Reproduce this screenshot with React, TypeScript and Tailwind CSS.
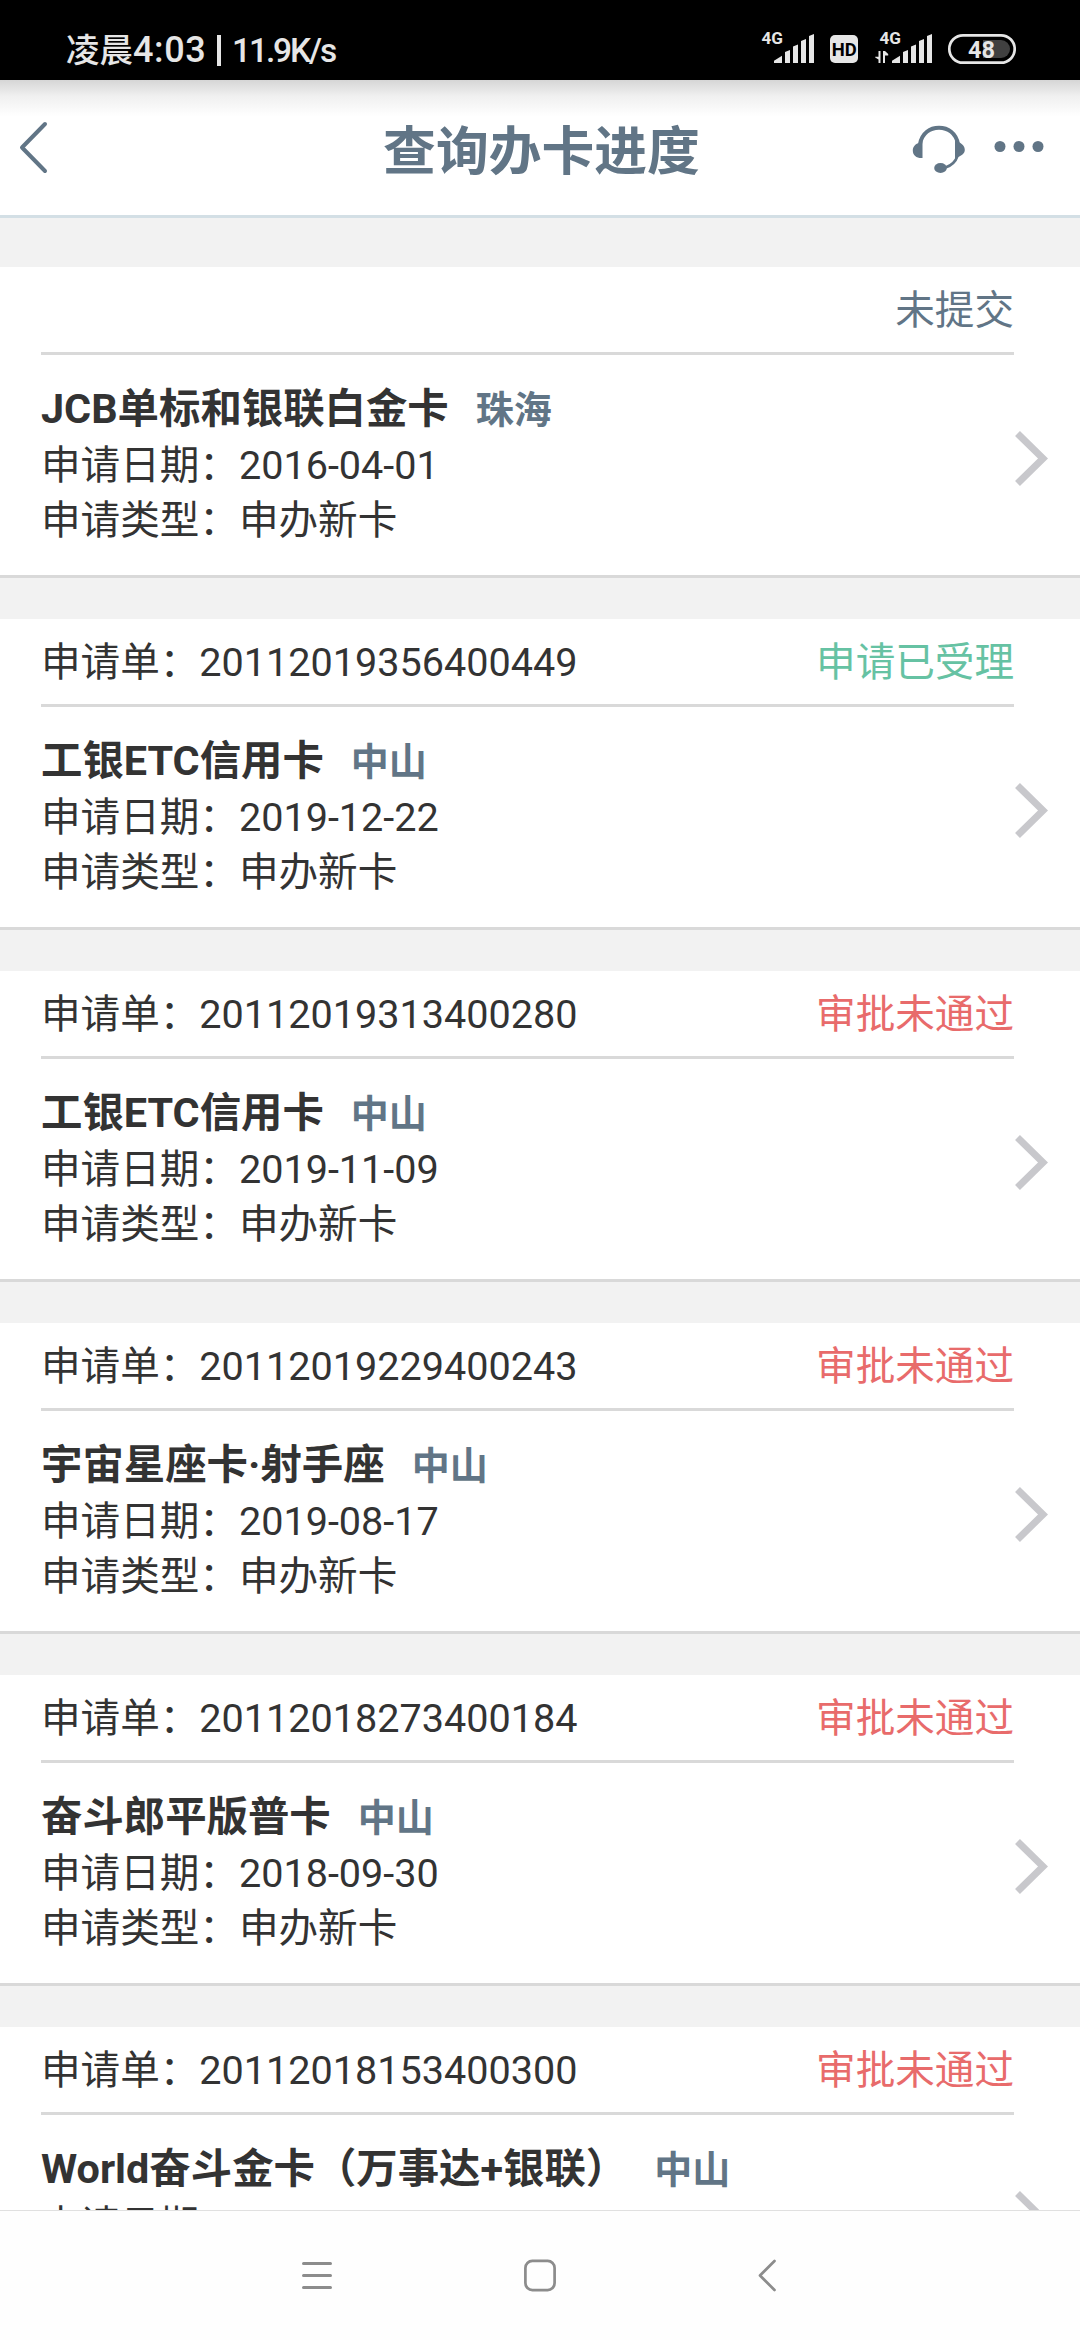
import React from 'react';

type Status = 'draft' | 'accepted' | 'rejected';

type Application = {
  id: string | null;
  card: string;
  city: string;
  date?: string;
  type?: string;
  status: Status;
};

const APPLICATIONS: Application[] = [
  { id: null, card: 'JCB单标和银联白金卡', city: '珠海', date: '2016-04-01', type: '申办新卡', status: 'draft' },
  { id: '20112019356400449', card: '工银ETC信用卡', city: '中山', date: '2019-12-22', type: '申办新卡', status: 'accepted' },
  { id: '20112019313400280', card: '工银ETC信用卡', city: '中山', date: '2019-11-09', type: '申办新卡', status: 'rejected' },
  { id: '20112019229400243', card: '宇宙星座卡·射手座', city: '中山', date: '2019-08-17', type: '申办新卡', status: 'rejected' },
  { id: '20112018273400184', card: '奋斗郎平版普卡', city: '中山', date: '2018-09-30', type: '申办新卡', status: 'rejected' },
  { id: '20112018153400300', card: 'World奋斗金卡（万事达+银联）', city: '中山', status: 'rejected' },
];

const STATUS_LABEL: Record<Status, string> = {
  draft: '未提交',
  accepted: '申请已受理',
  rejected: '审批未通过',
};

const STATUS_COLOR: Record<Status, string> = {
  draft: 'text-[#617586]',
  accepted: 'text-[#66c2a3]',
  rejected: 'text-[#e86b6b]',
};

function StatusBar(): React.ReactElement {
  return (
    <div className="flex h-20 shrink-0 items-start bg-black pl-[66px] pr-[64px] text-[#e6e6e6]">
      <div className="mt-[26px] flex items-baseline whitespace-nowrap font-medium leading-[48px]">
        <span className="w-[67px] text-[33.5px]">凌晨</span>
        <span className="w-[84px] text-[36px] tracking-[0.6px]">4:03</span>
        <span className="mr-[11px] h-[31px] w-1 translate-y-[4px] bg-[#e6e6e6]" />
        <span className="text-[33.5px] tracking-[-2.1px]">11.9K/s</span>
      </div>
      <svg width="260" height="40" viewBox="756 28 260 40" fill="#e6e6e6" className="ml-auto mt-7 shrink-0">
        <text x="761.5" y="44.3" fontSize="17" fontWeight="700" textLength="21.5" lengthAdjust="spacingAndGlyphs">4G</text>
        <path d="M774 63v-2.3l8-5V63zM785 63V52l5-2v13zM793 63V46.5l5-2V63zM801 63V41l5-2v24zM809 63V36l5-2v29z" />
        <rect x="830" y="35" width="28" height="28" rx="5" />
        <text x="831.7" y="56" fontSize="17.5" fontWeight="700" fill="#000" textLength="25" lengthAdjust="spacingAndGlyphs">HD</text>
        <text x="879.5" y="44.3" fontSize="17" fontWeight="700" textLength="21.5" lengthAdjust="spacingAndGlyphs">4G</text>
        <path d="M880.5 51v12h-2v-3.5l-3.3-2v-.8h3.3V51zM883 63V51h2l3.2 3v1.5h-3.2V63z" />
        <path d="M892 63v-2.3l8-5V63zM903 63V52l5-2v13zM911 63V46.5l5-2V63zM919 63V41l5-2v24zM927 63V36l5-2v29z" />
        <path d="M983 40h18a9 9 0 0 1 0 18h-18z" fill="#404040" />
        <rect x="949.3" y="35.3" width="65.4" height="27.4" rx="13.7" fill="none" stroke="#e6e6e6" strokeWidth="2.7" />
        <text x="968" y="57.5" fontSize="23.5" fontWeight="700" textLength="27" lengthAdjust="spacingAndGlyphs">48</text>
      </svg>
    </div>
  );
}

function HeadsetIcon(): React.ReactElement {
  return (
    <svg width="54" height="50" viewBox="0 0 54 50" className="mt-1 shrink-0" fill="#617586">
      <path d="M8 19C10 8 18 2.7 27 2.7S44 8 46 19" fill="none" stroke="#617586" strokeWidth="4" />
      <path d="M10.5 15.5V33C5 33.5.8 30.500.8 25.500c0-4 2.700-6.500 5.700-7.500z" />
      <path d="M43 15.5V33c1 .3 1.800-.2 2.600-.7 3.500-1.500 7.200-3.500 7.200-7.300 0-4-2.800-6-5.300-7.500z" />
      <path d="M45.5 31c-1.500 4.500-6 9.500-12 11.500" fill="none" stroke="#617586" strokeWidth="2.6" />
      <ellipse cx="28.5" cy="43" rx="6.3" ry="5" />
    </svg>
  );
}

function Header(): React.ReactElement {
  return (
    <header className="flex h-[138px] shrink-0 items-center justify-between border-b-[3px] border-[#d3dfe5] bg-linear-to-b from-[#d6d6d6] via-[#f0f0f0] via-[12%] to-white to-[27%] pl-[18px] pr-[36px]">
      <div className="flex w-[153px]">
        <svg width="32" height="54" viewBox="0 0 32 54" fill="none" stroke="#617586" strokeWidth="4" strokeLinecap="round" strokeLinejoin="round">
          <path d="M27 3 4 26.500 27 50" />
        </svg>
      </div>
      <h1 className="mt-[8px] text-[52.8px] font-bold leading-[60px] text-[#617586]">查询办卡进度</h1>
      <div className="flex w-[132px] items-center justify-between">
        <HeadsetIcon />
        <svg width="50" height="14" viewBox="0 0 50 14" fill="#617586">
          <circle cx="6" cy="5.5" r="5.5" />
          <circle cx="25" cy="5.5" r="5.5" />
          <circle cx="44" cy="5.5" r="5.5" />
        </svg>
      </div>
    </header>
  );
}

function ApplicationCard({ item }: { item: Application }): React.ReactElement {
  return (
    <section className="h-[311px] shrink-0 border-b-[3px] border-[#d9d9d9] bg-white pl-[41px] text-[39.6px] text-[#333333]">
      <div className="mr-[66px] flex h-[88px] items-center justify-between border-b-[3px] border-[#d9d9d9] pt-[2px]">
        <span>{item.id && `申请单：${item.id}`}</span>
        <span className={STATUS_COLOR[item.status]}>{STATUS_LABEL[item.status]}</span>
      </div>
      <div className="flex justify-between pr-8">
        <div className="whitespace-nowrap pt-[25px]">
          <div className="flex h-[58px] items-baseline gap-[27px] font-bold leading-[58px]">
            <h2 className="text-[41.4px]">{item.card}</h2>
            <span className="text-[38px] text-[#617586]">{item.city}</span>
          </div>
          <p className="leading-[55px]">申请日期：{item.date}</p>
          {item.type && <p className="leading-[55px]">申请类型：{item.type}</p>}
        </div>
        <svg width="33" height="55" viewBox="0 0 33 55" fill="none" stroke="#c8c8cc" strokeWidth="7" className="mt-[76px] shrink-0">
          <path d="M2.500 2.500 28 27.500 2.500 52.500" />
        </svg>
      </div>
    </section>
  );
}

function NavBar(): React.ReactElement {
  return (
    <nav className="flex h-[130px] shrink-0 items-center justify-between border-t border-[#e0e0e0] bg-[#fefefe] pl-[302px] pr-[304px] text-[#8c8c8c]">
      <svg width="30" height="34" viewBox="0 0 30 34" fill="none" stroke="currentColor" strokeWidth="3" strokeLinecap="round">
        <path d="M1.5 4.500h27M1.500 16.500h27M1.500 28.500h27" />
      </svg>
      <svg width="32" height="34" viewBox="0 0 32 34" fill="none" stroke="currentColor" strokeWidth="2.7" className="mr-[10px]">
        <rect x="1.4" y="1.9" width="29.2" height="29.2" rx="7" />
      </svg>
      <svg width="18" height="34" viewBox="0 0 18 34" fill="none" stroke="currentColor" strokeWidth="2.7" strokeLinecap="round" strokeLinejoin="round">
        <path d="M16.500 2 2 16.500 16.500 31" />
      </svg>
    </nav>
  );
}

export default function App(): React.ReactElement {
  return (
    <div className="flex h-[2340px] w-[1080px] flex-col overflow-hidden bg-[#f2f2f2] font-['Roboto','Noto_Sans_CJK_SC',sans-serif]">
      <StatusBar />
      <Header />
      <main className="flex min-h-0 flex-1 flex-col gap-[41px] overflow-hidden pt-[49px]">
        {APPLICATIONS.map((item, index) => (
          <ApplicationCard key={item.id ?? index} item={item} />
        ))}
      </main>
      <NavBar />
    </div>
  );
}
